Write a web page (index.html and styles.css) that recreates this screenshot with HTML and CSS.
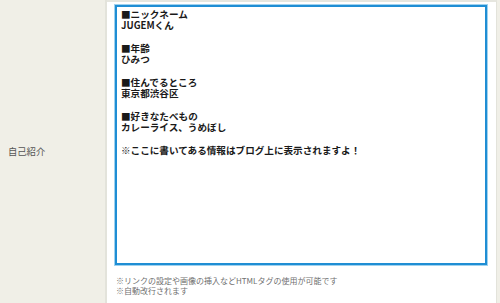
FILE: index.html
```html
<!DOCTYPE html>
<html lang="ja">
<head>
<meta charset="utf-8">
<title>自己紹介</title>
<link rel="stylesheet" href="styles.css">
</head>
<body>
<div class="form-row">
  <div class="label-cell">自己紹介</div>
  <div class="field-cell">
    <textarea class="profile-input">■ニックネーム
JUGEMくん

■年齢
ひみつ

■住んでるところ
東京都渋谷区

■好きなたべもの
カレーライス、うめぼし

※ここに書いてある情報はブログ上に表示されますよ！</textarea>
    <p class="notes">※リンクの設定や画像の挿入などHTMLタグの使用が可能です<br>※自動改行されます</p>
  </div>
</div>
</body>
</html>
```

FILE: styles.css
```css
html, body {
  margin: 0;
  padding: 0;
  background: #f0efe7;
}
body {
  width: 500px;
  height: 303px;
  overflow: hidden;
  font-family: "Noto Sans CJK JP", "Noto Sans", sans-serif;
}
.form-row {
  display: grid;
  grid-template-columns: 107px 390px;
  height: 303px;
}
.label-cell {
  background: #f0efe7;
  border-right: 2px solid #e3e3db;
  color: #555;
  font-size: 9.3px;
  display: flex;
  align-items: center;
  padding-left: 8px;
  padding-bottom: 1px;
}
.field-cell {
  background: #fff;
  border-top: 2px solid #e6e6df;
  border-right: 1px solid #e3e3db;
  padding: 3px 8px 0 8px;
}
.profile-input {
  display: block;
  box-sizing: border-box;
  width: 372px;
  height: 260px;
  margin: 0;
  padding: 2px 4px;
  border: 2px solid #1f8ed4;
  box-shadow: 0 0 0 1px #9fd2ef;
  outline: none;
  resize: none;
  overflow: hidden;
  font-family: "Noto Sans CJK JP", "Noto Sans", sans-serif;
  font-size: 9.6px;
  line-height: 11.35px;
  font-weight: 700;
  color: #1a1a1a;
  background: #fff;
}
.notes {
  margin: 11px 0 0 1px;
  font-size: 8px;
  line-height: 10px;
  color: #707070;
}
```
